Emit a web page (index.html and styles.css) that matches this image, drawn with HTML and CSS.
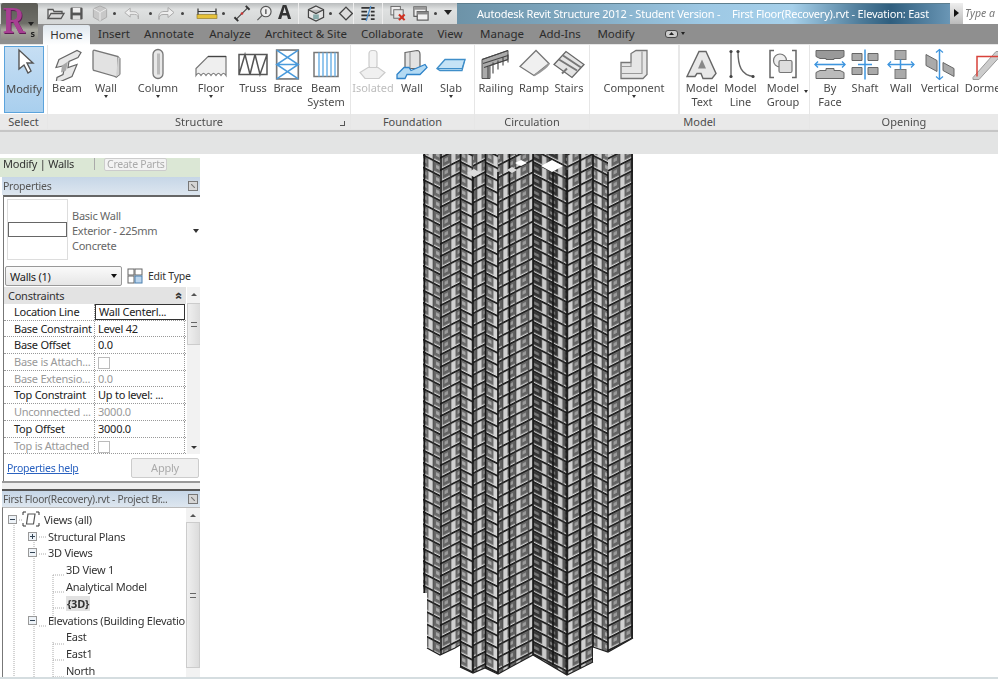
FILE: index.html
```html
<!DOCTYPE html>
<html lang="en">
<head>
<meta charset="utf-8">
<title>Autodesk Revit Structure 2012</title>
<link rel="stylesheet" href="styles.css">
</head>
<body>
<div class="app">
  <header class="titlebar">
    <div class="appbtn"><span class="appr">R</span><span class="appcaret"></span><span class="apps">s</span></div>
    <div class="qat">
      <svg class="q q1" viewBox="0 0 20 16"><path d="M2 13V4h5l1 2h8v2" fill="#e9e9e9" stroke="#555" stroke-width="1.3"/><path d="M2 13l3-5h13l-3 5z" fill="#d8d8d8" stroke="#555" stroke-width="1.3"/></svg>
      <svg class="q q2" viewBox="0 0 16 16"><rect x="1.5" y="1.5" width="13" height="13" rx="1.5" fill="#555"/><rect x="4" y="2" width="8" height="5" fill="#eee"/><rect x="4" y="10" width="8" height="4.5" fill="#ddd"/></svg>
      <svg class="q q3" viewBox="0 0 18 18"><path d="M9 1l7 3v9l-7 4-7-4V4z" fill="#c8c8c8" stroke="#aaa"/><path d="M9 8l7-4M9 8v9M9 8L2 4" stroke="#eee" fill="none"/></svg>
      <i class="dot d1"></i>
      <svg class="q q4" viewBox="0 0 20 16"><path d="M8 2L2 7l6 5V9h5c3 0 4 2 4 5 1-5-1-8-5-8H8z" fill="#eee" stroke="#aaa"/></svg>
      <i class="dot d2"></i>
      <svg class="q q5" viewBox="0 0 20 16"><path d="M12 2l6 5-6 5V9H7c-3 0-4 2-4 5-1-5 1-8 5-8h4z" fill="#eee" stroke="#aaa"/></svg>
      <i class="dot d3"></i>
      <svg class="q q6" viewBox="0 0 22 14"><rect x="1" y="8" width="20" height="4" fill="#e6c23a" stroke="#8a7420" stroke-width=".6"/><path d="M2 5h18M2 2v6M20 2v6" stroke="#333" stroke-width="1.2" fill="none"/></svg>
      <i class="dot d4"></i>
      <svg class="q q7" viewBox="0 0 18 18"><path d="M3 15L15 3" stroke="#444" stroke-width="1.2"/><path d="M1 13l4 4M13 1l4 4" stroke="#333" stroke-width="2"/><circle cx="9" cy="9" r="1.4" fill="#c33"/></svg>
      <svg class="q q8" viewBox="0 0 18 18"><circle cx="11" cy="7" r="5.5" fill="#eee" stroke="#555" stroke-width="1.2"/><path d="M7 11l-5 5" stroke="#555" stroke-width="1.2"/><path d="M11 4.5v5" stroke="#333" stroke-width="1.2"/></svg>
      <span class="q q9">A</span>
      <i class="qsep s1"></i>
      <svg class="q q10" viewBox="0 0 20 18"><path d="M10 1l8 4v8l-8 4-8-4V5z" fill="#e4e4e4" stroke="#444" stroke-width="1.3"/><path d="M2 5l8 4 8-4" fill="#bbb" stroke="#444" stroke-width="1.2"/><rect x="7" y="10" width="6" height="5" fill="#8aa"/></svg>
      <i class="dot d5"></i>
      <svg class="q q11" viewBox="0 0 16 16"><path d="M8 2l6 6-6 6-6-6z" fill="#ddd" stroke="#444" stroke-width="1.3"/></svg>
      <i class="qsep s2"></i>
      <svg class="q q12" viewBox="0 0 18 18"><path d="M2 3h9M2 7h6M2 11h9M2 15h6M12 3h4M12 7h4M12 11h4M12 15h4" stroke="#333" stroke-width="2"/><path d="M12 1L7 17" stroke="#4b8fd0" stroke-width="1.3"/></svg>
      <i class="qsep s3"></i>
      <svg class="q q13" viewBox="0 0 18 18"><rect x="1.5" y="1.5" width="10" height="9" fill="#eee" stroke="#666"/><rect x="4.5" y="5" width="10" height="9" fill="#e4e4e4" stroke="#666"/><path d="M10 10l6 6M16 10l-6 6" stroke="#d03020" stroke-width="2.2"/></svg>
      <svg class="q q14" viewBox="0 0 18 18"><rect x="1.5" y="2" width="13" height="10" fill="#eee" stroke="#555" stroke-width="1.2"/><rect x="1.5" y="2" width="13" height="3" fill="#999"/><rect x="5" y="7" width="11.5" height="9" fill="#f2f2f2" stroke="#555" stroke-width="1.2"/><rect x="5" y="7" width="11.5" height="3" fill="#888"/></svg>
      <i class="dot d6"></i>
      <span class="qdrop"><i></i></span>
    </div>
    <div class="wintitle"><span>Autodesk Revit Structure 2012 - Student Version -</span><span>First Floor(Recovery).rvt - Elevation: East</span></div>
    <div class="search"><span class="sarrow"></span><span class="sinput">Type a</span></div>
  </header>

  <nav class="tabs">
    <span class="tab t-home">Home</span>
    <span class="tab t-a">Insert</span>
    <span class="tab t-b">Annotate</span>
    <span class="tab t-c">Analyze</span>
    <span class="tab t-d">Architect &amp; Site</span>
    <span class="tab t-e">Collaborate</span>
    <span class="tab t-f">View</span>
    <span class="tab t-g">Manage</span>
    <span class="tab t-h">Add-Ins</span>
    <span class="tab t-i">Modify</span>
    <span class="tabicon"><i></i></span><span class="tabcaret"></span>
  </nav>

  <section class="ribbon">
    <div class="panel p-select">
      <div class="tools">
        <div class="tool modify">
          <svg viewBox="0 0 32 32"><path d="M11 3v19l5-4 4 8 3-2-4-8h6z" fill="#fff" stroke="#555" stroke-width="1.4"/></svg>
          <span>Modify</span>
        </div>
      </div>
      <div class="pfoot">Select</div>
    </div>

    <div class="panel p-structure">
      <div class="tools">
        <div class="tool w38"><svg viewBox="0 0 32 32"><path d="M8 11L26 2l4 2-3 5-9 4-1 6 9-3-5 12-16 7 1-6 6-3 2-9-9 2z" fill="#e8e8e8" stroke="#666" stroke-width="1.2"/><path d="M17 13l-2 9-5 2 1-7z" fill="#a8a8a8"/></svg><span>Beam</span></div>
        <div class="tool w40"><svg viewBox="0 0 32 32"><path d="M3 3c0-1 1-2 2-1l23 6v18c0 2-2 3-3 2L4 22c-1 0-1-1-1-2z" fill="#e2e2e2" stroke="#777" stroke-width="1.3"/><path d="M28 8l2 2v16l-4 3" fill="#cfcfcf" stroke="#777"/></svg><span>Wall</span><i class="caret"></i></div>
        <div class="tool w64"><svg viewBox="0 0 32 32"><rect x="11" y="1" width="10" height="29" rx="5" fill="#e8e8e8" stroke="#777" stroke-width="1.3"/><rect x="15" y="5" width="3" height="21" fill="#bbb"/></svg><span>Column</span><i class="caret"></i></div>
        <div class="tool w42"><svg viewBox="0 0 32 32"><path d="M1 27v-7L13 8h18v19c-2-3-3-3-5 0-2-3-3-3-5 0-2-3-3-3-5 0-2-3-3-3-5 0-2-3-3-3-5 0-2-3-3-3-5 0z" fill="#efefef" stroke="#777" stroke-width="1.2"/><path d="M13 8h18" stroke="#444" stroke-width="1.4"/></svg><span>Floor</span><i class="caret"></i></div>
        <div class="tool w42"><svg viewBox="0 0 32 32"><path d="M2 6h28v20H2zM2 26L8 6l5 20 5-20 5 20 7-20" fill="#fff" stroke="#555" stroke-width="1.5"/></svg><span>Truss</span></div>
        <div class="tool w28"><svg viewBox="0 0 26 32"><rect x="2" y="2" width="21" height="28" fill="#fff" stroke="#777" stroke-width="1.6"/><path d="M2 2l21 14L2 30M23 2L2 16l21 14M2 16h21" fill="none" stroke="#4b9bdc" stroke-width="1.5"/></svg><span>Brace</span></div>
        <div class="tool w48"><svg viewBox="0 0 32 32"><rect x="4" y="4" width="24" height="24" fill="#fff" stroke="#777" stroke-width="1.5"/><path d="M9 4v24M13 4v24M17 4v24M21 4v24M25 4v24" stroke="#6ab0e6" stroke-width="1.4"/></svg><span>Beam<br>System</span></div>
      </div>
      <div class="pfoot">Structure<i class="launch"></i></div>
    </div>

    <div class="panel p-found">
      <div class="tools">
        <div class="tool w44 off"><svg viewBox="0 0 32 32"><rect x="12" y="2" width="8" height="18" rx="3" fill="#f3f3f3" stroke="#ccc" stroke-width="1.2"/><path d="M3 24l8-5h10l7 5-6 6H8z" fill="#f0f0f0" stroke="#ccc" stroke-width="1.2"/></svg><span>Isolated</span></div>
        <div class="tool w34"><svg viewBox="0 0 32 32"><path d="M9 4l12-2c3 0 3 2 3 4v14H9z" fill="#e2e2e2" stroke="#666" stroke-width="1.2"/><path d="M14 3v17" stroke="#888"/><path d="M1 26l7-7h5l2 3 14-6 2 3-7 7H11l-2 4H1z" fill="#b4daf3" stroke="#2f83c9" stroke-width="1.3"/></svg><span>Wall</span></div>
        <div class="tool w44"><svg viewBox="0 0 32 32"><path d="M2 20L10 11h20l-3 11H5z" fill="#c6e3f6" stroke="#3f8ec9" stroke-width="1.3"/><path d="M2 20h25l3-9" fill="none" stroke="#3f8ec9"/></svg><span>Slab</span><i class="caret"></i></div>
      </div>
      <div class="pfoot">Foundation</div>
    </div>

    <div class="panel p-circ">
      <div class="tools">
        <div class="tool w42"><svg viewBox="0 0 32 32"><path d="M2 30V11L28 2v9L10 17v13z" fill="#aaa" stroke="#555"/><path d="M2 11l26-9M3 15l25-8M4 19l24-8M8 17v13M13 14v11M18 12v9M23 9v8M28 6v8" stroke="#444" stroke-width="1.1" fill="none"/></svg><span>Railing</span></div>
        <div class="tool w34"><svg viewBox="0 0 32 32"><path d="M2 18L18 2l13 13-15 12z" fill="#f0f0f0" stroke="#777" stroke-width="1.3"/><path d="M31 15c-3 5-10 9-15 12" fill="none" stroke="#999" stroke-width="2"/></svg><span>Ramp</span></div>
        <div class="tool w36"><svg viewBox="0 0 32 32"><path d="M1 16L13 3l18 13-12 13z" fill="#e4e4e4" stroke="#666" stroke-width="1.3"/><path d="M6 11l18 11M10 7l18 12M14 20l-5 5" stroke="#777" stroke-width="2" fill="none"/></svg><span>Stairs</span></div>
      </div>
      <div class="pfoot">Circulation</div>
    </div>

    <div class="panel p-model">
      <div class="tools">
        <div class="tool w84 sepr"><svg viewBox="0 0 32 32"><path d="M3 14h10V5l5-3h11v24l-4 4H3z" fill="#e6e6e6" stroke="#777" stroke-width="1.3"/><path d="M13 14v4H3M24 3v22H3" fill="none" stroke="#999" stroke-width="1.2"/></svg><span>Component</span><i class="caret"></i></div>
        <div class="tool w44"><svg viewBox="0 0 32 32"><path d="M1 28L13 3h7l10 22-4 5h-9l-2-5h-4l-2 3z" fill="#e8e8e8" stroke="#666" stroke-width="1.4"/><path d="M12 20l4-9 4 9z" fill="#888"/></svg><span>Model<br>Text</span></div>
        <div class="tool w33"><svg viewBox="0 0 32 32"><path d="M6 3v25M13 3c0 14 3 24 16 25" fill="none" stroke="#666" stroke-width="1.4"/><circle cx="6" cy="3" r="1.6" fill="#444"/><circle cx="6" cy="28" r="1.6" fill="#444"/><circle cx="13" cy="3" r="1.6" fill="#444"/><circle cx="28" cy="28" r="1.6" fill="#444"/></svg><span>Model<br>Line</span></div>
        <div class="tool w52"><svg viewBox="0 0 32 32"><path d="M7 2H3v27h4M25 2h4v27h-4" fill="none" stroke="#666" stroke-width="1.5"/><circle cx="13" cy="12" r="6.5" fill="#eee" stroke="#777" stroke-width="1.2"/><rect x="12" y="12" width="13" height="12" rx="1.5" fill="#ddd" stroke="#777" stroke-width="1.2"/></svg><span>Model<br>Group</span><i class="caretside"></i></div>
      </div>
      <div class="pfoot">Model</div>
    </div>

    <div class="panel p-open">
      <div class="tools">
        <div class="tool w40"><svg viewBox="0 0 32 32"><path d="M2 2h28v6l-4 2H20v1h-8v-1H6L2 8z" fill="#999" stroke="#666"/><path d="M2 30h28v-6l-4-2h-6v-2h-8v2H6l-4 2z" fill="#bbb" stroke="#666"/><path d="M1 16h30" stroke="#3e95de" stroke-width="1.6"/><path d="M4 13l-3 3 3 3M28 13l3 3-3 3" stroke="#3e95de" stroke-width="1.4" fill="none"/></svg><span>By<br>Face</span></div>
        <div class="tool w30"><svg viewBox="0 0 32 32"><path d="M3 5h10v7H3zM19 5h10v7H19zM3 19h10v7H3zM19 19h10v7H19z" fill="#aaa" stroke="#666"/><path d="M16 1v30M9 16h14" stroke="#3e95de" stroke-width="1.5"/></svg><span>Shaft</span></div>
        <div class="tool w42"><svg viewBox="0 0 32 32"><rect x="10" y="2" width="11" height="9" fill="#aaa" stroke="#777"/><rect x="10" y="21" width="11" height="9" fill="#aaa" stroke="#777"/><path d="M3 16h26M15.500 11v10" stroke="#3e95de" stroke-width="1.5"/><path d="M6 13l-3 3 3 3M26 13l3 3-3 3" stroke="#3e95de" stroke-width="1.3" fill="none"/></svg><span>Wall</span></div>
        <div class="tool w36"><svg viewBox="0 0 32 32"><path d="M2 6l11 6v11L2 17zM19 14l11 6v8l-11-6z" fill="#aaa" stroke="#666"/><path d="M15.500 1v30" stroke="#3e95de" stroke-width="1.5"/><path d="M12 4l3.500-3 3.500 3M12 28l3.500 3 3.500-3" stroke="#3e95de" stroke-width="1.2" fill="none"/></svg><span>Vertical</span></div>
        <div class="tool w54"><svg viewBox="0 0 32 32"><path d="M4 29L27 3h4v5L10 31H4z" fill="#ccc" stroke="#999"/><path d="M8 28V8h22" fill="none" stroke="#d8423a" stroke-width="1.5"/></svg><span>Dormer</span></div>
      </div>
      <div class="pfoot">Opening</div>
    </div>
  </section>

  <div class="optionsbar"></div>

  <main class="workspace">
    <aside class="side">
      <div class="ctx"><span>Modify | Walls</span><i class="ctxsep"></i><span class="ctxbtn">Create Parts</span></div>

      <div class="dockhead"><span>Properties</span><i class="close"></i></div>
      <div class="props">
        <div class="typebox">
          <div class="preview"><i></i></div>
          <div class="typename">Basic Wall<br>Exterior - 225mm<br>Concrete</div>
          <i class="typecaret"></i>
        </div>
        <div class="filter">
          <div class="select"><span>Walls (1)</span><i></i></div>
          <svg class="edit" viewBox="0 0 16 16"><rect x="1" y="1" width="6" height="6" fill="#fff" stroke="#666"/><rect x="1" y="8" width="6" height="7" fill="#fff" stroke="#666"/><rect x="8" y="1" width="7" height="6" fill="#fff" stroke="#666"/><rect x="8" y="8" width="7" height="7" fill="#bcd6ee" stroke="#4a7fae"/></svg>
          <span class="edittxt">Edit Type</span>
        </div>
        <div class="tablewrap">
          <div class="ptable">
            <div class="groupb"><span>Constraints</span><b>&#187;</b></div>
            <div class="row"><span class="k">Location Line</span><span class="v active">Wall Centerl...</span></div>
            <div class="row"><span class="k">Base Constraint</span><span class="v">Level 42</span></div>
            <div class="row"><span class="k">Base Offset</span><span class="v">0.0</span></div>
            <div class="row dim"><span class="k">Base is Attach...</span><span class="v"><i class="check"></i></span></div>
            <div class="row dim"><span class="k">Base Extensio...</span><span class="v">0.0</span></div>
            <div class="row"><span class="k">Top Constraint</span><span class="v">Up to level: ...</span></div>
            <div class="row dim"><span class="k">Unconnected ...</span><span class="v">3000.0</span></div>
            <div class="row"><span class="k">Top Offset</span><span class="v">3000.0</span></div>
            <div class="row dim"><span class="k">Top is Attached</span><span class="v"><i class="check"></i></span></div>
          </div>
          <div class="vscroll"><i class="up"></i><div class="thumb"><u></u></div><i class="down"></i></div>
        </div>
        <div class="propfoot"><a class="help">Properties help</a><span class="apply">Apply</span></div>
      </div>
      <div class="splitter"></div>

      <div class="dockhead browserhead"><span>First Floor(Recovery).rvt - Project Br...</span><i class="close"></i></div>
      <div class="browser">
        <div class="tree">
          <svg class="treelines" viewBox="0 0 186 172"><path d="M11 14V172M31 31V172M50 64V113M50 131V172M16 9h6M36 26h8M36 43h8M36 115h8M50 64h12M50 81h12M50 97h12M50 133h12M50 149h12M50 166h12" fill="none" stroke="#aaa" stroke-dasharray="1 1"/></svg>
          <div class="node l0"><i class="exp minus"></i><svg class="viewsicon" viewBox="0 0 18 16"><path d="M1 4V1h3M14 1h3v3M1 12v3h3M14 15h3v-3" fill="none" stroke="#333"/><path d="M6 3h7l-1.500 10h-7z" fill="#fff" stroke="#555" stroke-width="1.200"/></svg><span>Views (all)</span></div>
          <div class="node l1"><i class="exp plus"></i><span>Structural Plans</span></div>
          <div class="node l1"><i class="exp minus"></i><span>3D Views</span></div>
          <div class="node l2"><span>3D View 1</span></div>
          <div class="node l2"><span>Analytical Model</span></div>
          <div class="node l2"><span class="cur">{3D}</span></div>
          <div class="node l1"><i class="exp minus"></i><span>Elevations (Building Elevatio</span></div>
          <div class="node l2"><span>East</span></div>
          <div class="node l2"><span>East1</span></div>
          <div class="node l2"><span>North</span></div>
        </div>
        <div class="vscroll tall"><i class="up"></i><div class="thumb"><u></u></div></div>
      </div>
    </aside>

    <div class="canvas">
      <svg class="tower" viewBox="421 154 215 524" role="img" aria-label="Elevation of a high-rise building">
        <defs>
          <pattern id="lp" width="13" height="12.300" patternUnits="userSpaceOnUse" patternTransform="skewY(27)">
            <rect width="13" height="12.300" fill="#d4d4d4"/>
            <rect x="5" y="2" width="7.500" height="9" fill="#6a6a6a"/>
            <rect x="7" y="4" width="3.500" height="3.500" fill="#a8a8a8"/>
            <path d="M0 1h13" stroke="#222" stroke-width="2"/>
            <path d="M4.500 0v12.300" stroke="#333" stroke-width="1.200"/>
          </pattern>
          <pattern id="rp" width="13" height="12.300" patternUnits="userSpaceOnUse" patternTransform="skewY(-27)">
            <rect width="13" height="12.300" fill="#d0d0d0"/>
            <rect x=".5" y="2" width="7.500" height="9" fill="#636363"/>
            <rect x="2.500" y="4" width="3.500" height="3.500" fill="#9c9c9c"/>
            <path d="M0 1h13" stroke="#222" stroke-width="2"/>
            <path d="M8.500 0v12.300" stroke="#333" stroke-width="1.200"/>
          </pattern>
          <pattern id="ld" width="16" height="12.300" patternUnits="userSpaceOnUse" patternTransform="skewY(27)">
            <rect width="16" height="12.300" fill="#cacaca"/>
            <rect x="4" y="2" width="10" height="9" fill="#333"/>
            <rect x="6" y="4.500" width="5" height="3" fill="#7a7a7a"/>
            <path d="M0 1h16" stroke="#222" stroke-width="2"/>
            <path d="M3 0v12.300" stroke="#333"/>
          </pattern>
          <clipPath id="outline">
            <path d="M423 154V593H427V648L440 655L455 648L460 645V667L473 673L485 668L498 674L533 655L567 675L593 662V647L608 652L633 638V154Z"/>
          </clipPath>
        </defs>
        <g clip-path="url(#outline)">
          <rect x="423" y="154" width="20" height="530" fill="url(#lp)"/>
          <rect x="440" y="154" width="20" height="530" fill="url(#rp)"/>
          <rect x="460" y="154" width="13" height="530" fill="url(#lp)"/>
          <rect x="473" y="154" width="12" height="530" fill="url(#rp)"/>
          <rect x="485" y="154" width="13" height="530" fill="url(#lp)"/>
          <rect x="498" y="154" width="35" height="530" fill="url(#rp)"/>
          <rect x="533" y="154" width="34" height="530" fill="url(#ld)"/>
          <rect x="567" y="154" width="26" height="530" fill="url(#rp)"/>
          <rect x="593" y="154" width="15" height="530" fill="url(#lp)"/>
          <rect x="608" y="154" width="25" height="530" fill="url(#rp)"/>
          <path d="M424.500 154V593M441 154V655M460.500 154V667M473 170V673M485.500 154V668M498 172V674M509.500 154V668M533 154V655M553 172V665M567 170V675M580 154V668M593 154V662M608 172V652M632 154V638" fill="none" stroke="#161616" stroke-width="1.600"/>
          <path d="M515 163l6-3 6 3-6 3zM541 166l11-6 11 6-11 6z" fill="#fff"/>
          <path d="M467 173l7-4 7 4-7 4zM507 170l5-3 5 3-5 3z" fill="#dcdcdc"/>
        </g>
        <path d="M427 648L440 655L455 648L460 645M460 667L473 673L485 668L498 674L533 655L567 675L593 662M593 647L608 652L633 638" fill="none" stroke="#222" stroke-width="1.200"/>
      </svg>
    </div>
  </main>
  <div class="bottomline"></div>
</div>
</body>
</html>
```
FILE: styles.css
```css
* { box-sizing: border-box; }
html, body { margin: 0; padding: 0; background: #fff; }
body { width: 1000px; height: 684px; overflow: hidden; font-family: "Noto Sans", "Liberation Sans", sans-serif; font-size: 11px; color: #333; }
.app { width: 998px; height: 684px; padding-top: 3px; display: flex; flex-direction: column; overflow: hidden; filter: blur(.55px); }

.titlebar { height: 21px; display: flex; background: linear-gradient(#b9bcbd, #dfe1e1 30%, #d4d6d6); position: relative; flex: none; }
.appbtn { width: 37px; height: 37px; margin-left: 1px; position: relative; z-index: 2; flex: none; background: linear-gradient(#5c5c56, #6e6e68 55%, #a8a89f 72%, #8e8e88); border-radius: 2px; }
.appr { position: absolute; left: 2px; top: 0; font: bold 38px/34px "Liberation Serif", serif; color: #a83f92; transform: scaleX(.8); transform-origin: 0 0; text-shadow: 1px 1px 0 #5f1b55; }
.appcaret { position: absolute; left: 27px; top: 19px; border: 3.5px solid transparent; border-top: 4px solid #222; border-bottom: 0; }
.apps { position: absolute; right: 3px; bottom: 1px; font-size: 9px; line-height: 11px; font-weight: 700; color: #222; }
.qat { width: 419px; position: relative; flex: none; }
.q { position: absolute; top: 2px; width: 18px; height: 17px; }
.q1 { left: 8px; width: 20px; } .q2 { left: 31px; width: 15px; } .q3 { left: 53px; }
.q4 { left: 85px; } .q5 { left: 118px; width: 20px; } .q6 { left: 158px; width: 22px; }
.q7 { left: 195px; } .q8 { left: 217px; }
.q9 { left: 240px; top: -2px; font-size: 19px; line-height: 22px; font-weight: 700; color: #333; width: auto; height: auto; }
.q10 { left: 268px; width: 20px; } .q11 { left: 299px; } .q12 { left: 321px; }
.q13 { left: 351px; } .q14 { left: 374px; }
.dot { position: absolute; top: 9px; width: 3px; height: 3px; background: #444; border-radius: 50%; }
.d1 { left: 75px; } .d2 { left: 111px; } .d3 { left: 143px; } .d4 { left: 184px; } .d5 { left: 291px; } .d6 { left: 396px; }
.qsep { position: absolute; top: 0; width: 1px; height: 21px; background: #bbb; border-right: 1px solid #eee; }
.s1 { left: 260px; } .s2 { left: 315px; } .s3 { left: 344px; }
.qdrop { position: absolute; left: 402px; top: 2px; width: 15px; height: 17px; }
.qdrop i { display: block; margin: 5px auto 0; width: 0; border: 4px solid transparent; border-top: 5px solid #222; border-bottom: 0; }
.wintitle { width: 493px; height: 21px; flex: none; display: flex; padding-left: 20px; gap: 8px; background: linear-gradient(90deg, #6d93a8 0, #7ea7bf 22%, #9dc8e4 50%, #a6d0ea 68%, #4d7b99 82%, #2f5e7e 88%, #6a96b5 100%); border-top: 1px solid #5d7e8e; color: #fff; font-size: 11px; letter-spacing: -.2px; line-height: 19px; white-space: nowrap; overflow: hidden; }
.wintitle span:first-child { width: 247px; flex: none; }
.search { flex: 1; display: flex; background: #ddd; min-width: 0; }
.sarrow { width: 13px; flex: none; background: linear-gradient(#eee, #bbb); position: relative; }
.sarrow::after { content: ""; position: absolute; left: 4px; top: 6px; border: 4px solid transparent; border-left: 5px solid #111; border-right: 0; }
.sinput { flex: 1; background: #fff; padding-left: 2px; font-style: italic; color: #777; font-size: 10.5px; line-height: 21px; white-space: nowrap; overflow: hidden; }

.tabs { height: 20px; flex: none; display: flex; background: #8f8f8f; color: #2c2c2c; font-size: 11.5px; position: relative; }
.tab { display: block; text-align: center; line-height: 19px; white-space: nowrap; flex: none; }
.t-home { margin-left: 43px; width: 47px; height: 20px; background: linear-gradient(#dfe7ee, #fff); margin-top: 1px; border-radius: 2px 2px 0 0; color: #333; }
.t-a { width: 48px; } .t-b { width: 62px; } .t-c { width: 60px; } .t-d { width: 92px; }
.t-e { width: 80px; } .t-f { width: 36px; } .t-g { width: 64px; margin-left: 2px; } .t-h { width: 52px; } .t-i { width: 60px; }
.tabicon { margin-left: 19px; margin-top: 6px; width: 13px; height: 8px; border-radius: 3px; background: #ccc; position: relative; border: 1px solid #444; }
.tabicon i { position: absolute; left: 3px; top: 1px; width: 5px; height: 3px; background: #222; clip-path: polygon(50% 0, 100% 100%, 0 100%); }
.tabcaret { margin: 8px 0 0 3px; width: 0; height: 0; border: 2.5px solid transparent; border-top: 3px solid #222; border-bottom: 0; }

.ribbon { height: 86px; flex: none; display: flex; gap: 1px; background: #e6e6e6; padding-top: 1px; border-bottom: 1px solid #e6e6e6; overflow: hidden; }
.panel { display: flex; flex-direction: column; flex: none; overflow: hidden; }
.p-select { width: 47px; } .p-structure { width: 302px; } .p-found { width: 123px; } .p-circ { width: 114px; } .p-model { width: 219px; } .p-open { width: 188px; }
.tools { height: 69px; display: flex; background: #fff; flex: none; }
.tool { display: flex; flex-direction: column; align-items: center; flex: none; padding-top: 3px; position: relative; line-height: 14px; color: #4a4a4a; text-align: center; white-space: nowrap; }
.tool svg { width: 32px; height: 33px; flex: none; }
.off { color: #bdbdbd; }
.w28 { width: 28px; } .w30 { width: 30px; } .w33 { width: 33px; } .w34 { width: 34px; } .w36 { width: 36px; } .w38 { width: 38px; } .w40 { width: 40px; } .w42 { width: 42px; } .w44 { width: 44px; } .w48 { width: 48px; } .w52 { width: 52px; } .w54 { width: 54px; } .w64 { width: 64px; } .w84 { width: 84px; }
.modify { width: 40px; height: 67px; margin: 1px 0 0 4px; background: linear-gradient(#c6def3, #a9cfee); border: 1px solid #5ba3dc; padding-top: 0; }
.modify svg { margin-bottom: 3px; height: 32px; }
.caret { position: absolute; left: 50%; margin-left: -2.5px; top: 50px; border: 2.5px solid transparent; border-top: 3px solid #333; border-bottom: 0; }
.caretside { position: absolute; right: 1px; top: 45px; border: 2.5px solid transparent; border-top: 3px solid #333; border-bottom: 0; }
.sepr { border-right: 2px solid #e8e8e8; width: 90px; }
.pfoot { flex: 1; background: #e9e9e9; text-align: center; line-height: 16px; color: #4d4d4d; position: relative; }
.launch { position: absolute; right: 5px; top: 7px; width: 5px; height: 5px; border-right: 1px solid #555; border-bottom: 1px solid #555; }
.optionsbar { height: 24px; flex: none; background: #e3e4e4; border-top: 2px solid #c6c6c6; }

.workspace { height: 523px; flex: none; display: flex; overflow: hidden; }
.side { width: 200px; flex: none; padding-top: 4px; display: flex; flex-direction: column; overflow: hidden; letter-spacing: -.25px; }
.ctx { height: 19px; flex: none; background: #dbe7d5; display: flex; align-items: flex-start; padding-left: 3px; color: #333; line-height: 11px; }
.ctxsep { width: 1px; height: 12px; background: #aaa; margin: 0 9px 0 20px; }
.ctxbtn { border: 1px solid #ccc; border-radius: 2px; background: #f3f3f3; padding: 0 2px; color: #aaa; font-size: 10.5px; line-height: 11px; }
.dockhead { height: 18px; flex: none; margin-left: 2px; display: flex; align-items: center; justify-content: space-between; background: linear-gradient(#c6d6e7, #dde6ef); color: #555; padding: 0 1px; font-size: 10.5px; white-space: nowrap; overflow: hidden; }
.close { width: 10px; height: 10px; border: 1px solid #777; background: #d5d5d5; flex: none; margin-right: 1px; position: relative; }
.close::after { content: ""; position: absolute; inset: 2px; background: #777; clip-path: polygon(0 0, 20% 0, 100% 80%, 100% 100%, 80% 100%, 0 20%); }
.props { height: 286px; flex: none; margin-left: 3px; border-top: 2px solid #666; border-left: 1px solid #777; display: flex; flex-direction: column; background: #fff; }
.typebox { height: 68px; flex: none; display: flex; padding: 2px 0 0 3px; position: relative; }
.preview { width: 61px; height: 61px; border: 1px solid #ddd; display: flex; align-items: center; }
.preview i { display: block; width: 100%; height: 15px; border: 1px solid #666; }
.typename { margin: 9px 0 0 4px; line-height: 15px; color: #666; }
.typecaret { position: absolute; right: 1px; top: 32px; border: 3px solid transparent; border-top: 4px solid #333; border-bottom: 0; }
.filter { height: 22px; flex: none; display: flex; align-items: center; }
.select { width: 117px; height: 20px; margin-left: 1px; border: 1px solid #999; border-radius: 2px; background: linear-gradient(#fafafa, #e6e6e6); display: flex; align-items: center; justify-content: space-between; padding: 0 4px; color: #222; }
.select i { border: 3px solid transparent; border-top: 4px solid #111; border-bottom: 0; }
.edit { width: 16px; height: 16px; margin: 0 5px 0 5px; }
.edittxt { color: #333; font-size: 10.500px; }
.tablewrap { display: flex; height: 167px; flex: none; overflow: hidden; }
.ptable { width: 182px; flex: none; }
.groupb { height: 17px; background: #e3e3e3; display: flex; justify-content: space-between; align-items: center; padding: 0 5px 0 4px; color: #333; }
.groupb b { transform: rotate(-90deg); font-size: 12px; line-height: 10px; color: #333; }
.row { height: 16.700px; display: grid; grid-template-columns: 91px 90px; border-bottom: 1px dotted #999; color: #222; line-height: 15.700px; }
.k { padding-left: 10px; border-right: 1px dotted #999; white-space: nowrap; overflow: hidden; }
.v { padding-left: 3px; white-space: nowrap; border-right: 1px dotted #999; }
.active { border: 1px solid #333; line-height: 14px; }
.dim { color: #999; }
.check { display: block; width: 12px; height: 12px; border: 1px solid #bbb; margin: 3px 0 0 0; }
.vscroll { width: 14px; flex: none; margin-left: 1px; background: #f2f2f2; position: relative; height: 100%; }
.thumb { position: absolute; left: 0; top: 16px; width: 100%; height: 42px; background: linear-gradient(90deg, #efefef, #dcdcdc); border: 1px solid #ccc; display: flex; align-items: center; justify-content: center; }
.thumb u { display: block; width: 6px; height: 5px; border-top: 1px solid #666; border-bottom: 1px solid #666; text-decoration: none; }
.up, .down { position: absolute; left: 4px; border: 3px solid transparent; }
.up { top: 6px; border-bottom: 3px solid #555; border-top: 0; }
.down { bottom: 5px; border-top: 3px solid #333; border-bottom: 0; }
.propfoot { flex: 1; display: flex; align-items: center; justify-content: space-between; padding: 0 1px 0 3px; }
.help { color: #2a62c0; text-decoration: underline; font-size: 10.500px; }
.apply { width: 68px; height: 20px; border: 1px solid #ccc; border-radius: 2px; background: #f0f0f0; color: #aaa; text-align: center; line-height: 18px; }
.splitter { height: 10px; flex: none; margin-left: 2px; border-top: 2px solid #999; border-bottom: 2px solid #555; background: #eee; }
.browserhead { height: 16px; font-size: 10.200px; }
.browser { flex: 1; margin-left: 2px; border-left: 1px solid #777; border-top: 1px solid #bbb; display: flex; overflow: hidden; background: #fff; min-height: 0; }
.tree { width: 183px; flex: none; padding-top: 3px; position: relative; overflow: hidden; color: #333; }
.treelines { position: absolute; left: 0; top: 3px; width: 186px; height: 172px; }
.node { height: 16.800px; display: flex; align-items: center; white-space: nowrap; position: relative; }
.l0 { padding-left: 5px; } .l1 { padding-left: 25px; } .l2 { padding-left: 63px; }
.l1 span { margin-left: 11px; } .viewsicon { width: 18px; height: 16px; margin: 0 4px 0 5px; background: #fff; }
.exp { width: 9px; height: 9px; border: 1px solid #999; flex: none; position: relative; background: #eef3f8; }
.exp::before { content: ""; position: absolute; left: 1px; right: 1px; top: 3px; height: 1px; background: #345; }
.plus::after { content: ""; position: absolute; top: 1px; bottom: 1px; left: 3px; width: 1px; background: #345; }
.cur { background: #e2e2e2; padding: 0 1px; font-weight: 700; color: #333; }
.tall { margin-left: 0; }
.tall .thumb { top: 14px; height: 146px; }

.canvas { flex: 1; padding-left: 221px; background: #fff; overflow: hidden; }
.tower { display: block; width: 215px; height: 524px; filter: blur(.4px); }
.bottomline { height: 2px; flex: none; background: #d5dde0; }
```
